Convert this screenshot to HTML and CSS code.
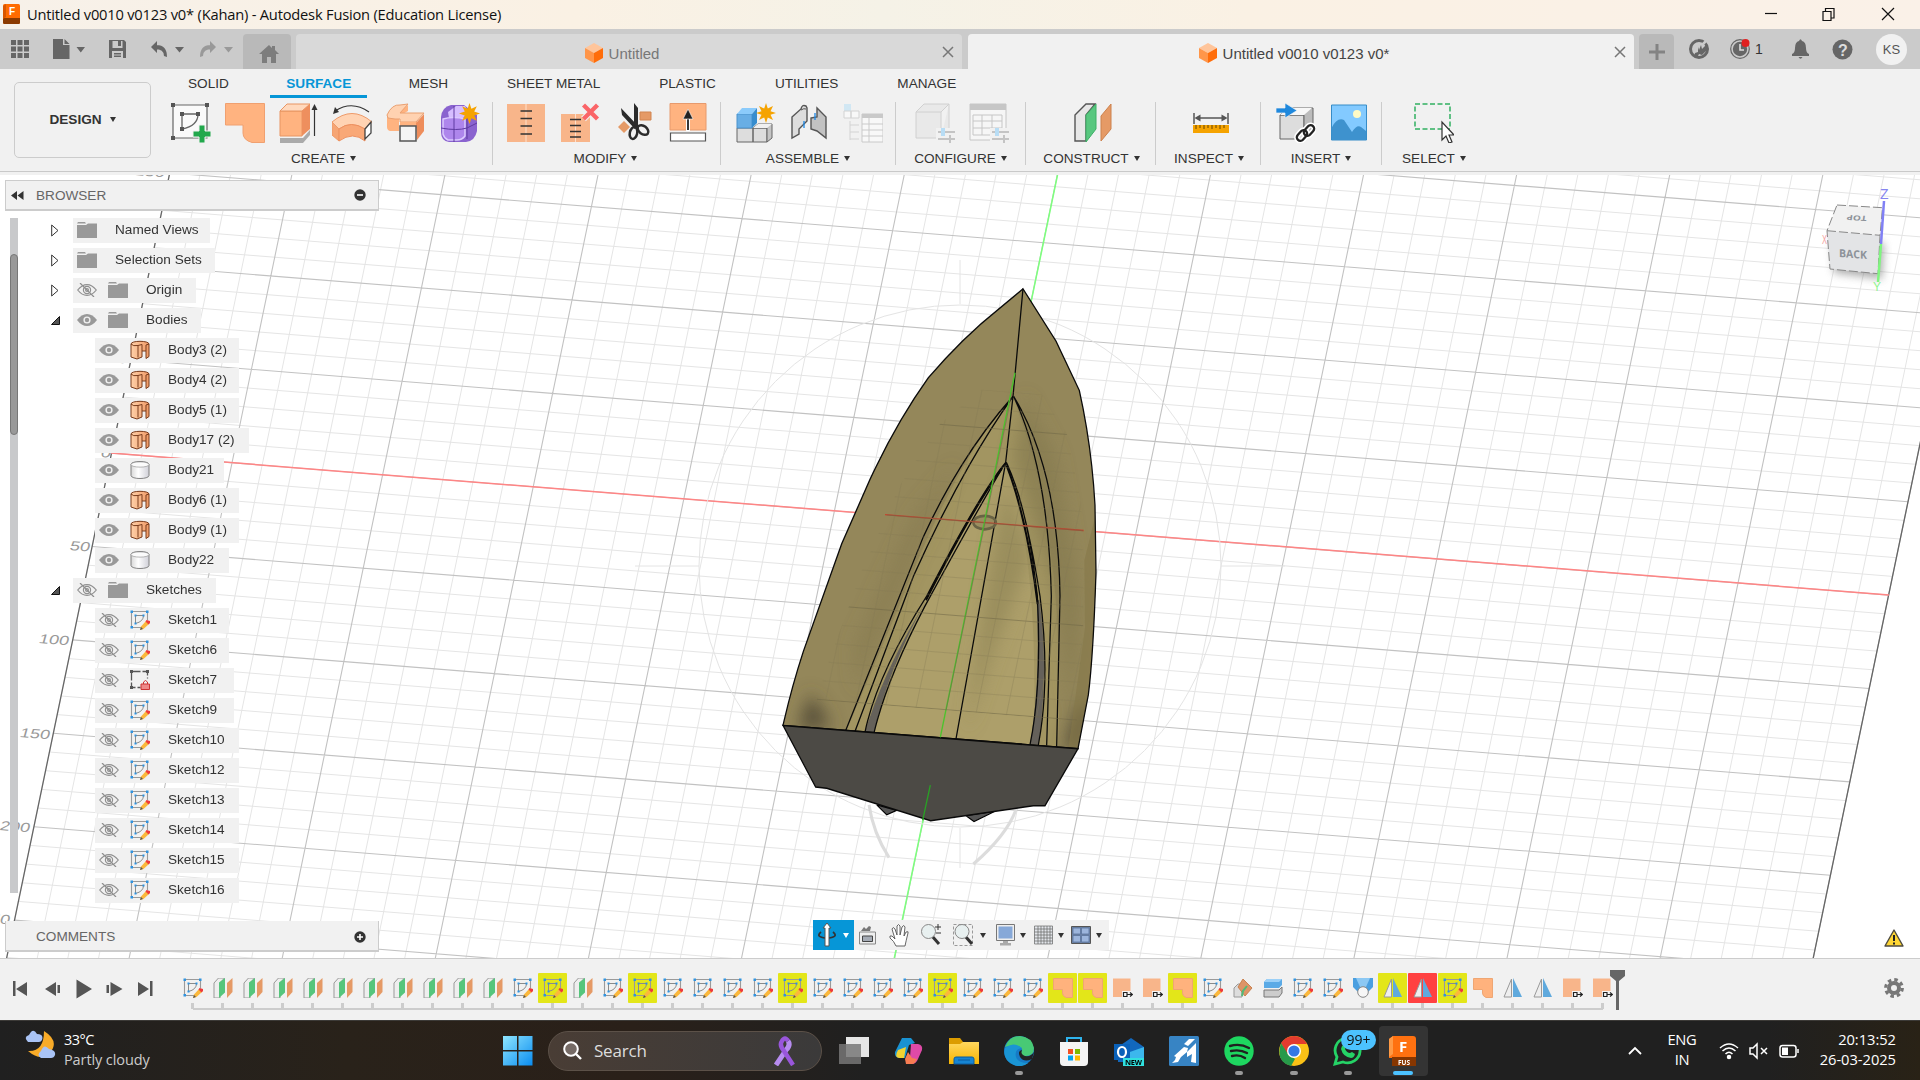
FILE: index.html
```html
<!DOCTYPE html>
<html lang="en">
<head>
<meta charset="utf-8">
<title>Untitled v0010 v0123 v0* (Kahan) - Autodesk Fusion (Education License)</title>
<link rel="stylesheet" href="styles.css">
</head>
<body>
<svg class="defs" width="0" height="0">
  <defs>
    <linearGradient id="gYellow" x2="0" y2="1"><stop stop-color="#ffd75e"/><stop offset="1" stop-color="#f7b500"/></linearGradient>
    <linearGradient id="gWin" x2="1" y2="1"><stop stop-color="#8fe6ff"/><stop offset="1" stop-color="#0a8cf0"/></linearGradient>
    <linearGradient id="gOrange" x2="1" y2="0"><stop stop-color="#ffd0a8"/><stop offset="1" stop-color="#f09a66"/></linearGradient>
    <linearGradient id="gWhite" x2="1" y2="0"><stop stop-color="#d8d8d8"/><stop offset=".4" stop-color="#fff"/><stop offset="1" stop-color="#d0d0d8"/></linearGradient>
    <symbol id="cube" viewBox="0 0 18 20"><path d="M9 0l9 5-9 5-9-5z" fill="#ffc59b"/><path d="M0 5l9 5v10l-9-5z" fill="#ff964a"/><path d="M18 5l-9 5v10l9-5z" fill="#ff6d0a"/></symbol>
    <symbol id="folder" viewBox="0 0 20 16"><path d="M0 1.500L1 0h7l1 1.500zM0 3h9l2-1.500h9V16H0z" fill="#999"/></symbol>
    <symbol id="eye" viewBox="0 0 20 14"><path d="M0 7Q4.500 1 10 1t10 6q-4.500 6-10 6T0 7z" fill="#999"/><circle cx="10" cy="7" r="3.600" fill="#f1f1f1"/><circle cx="10" cy="7" r="2.200" fill="#999"/></symbol>
    <symbol id="eyeoff" viewBox="0 0 20 14"><g fill="none" stroke="#8f8f8f" stroke-width="1.200"><path d="M.7 7Q5 1.600 10 1.600T19.300 7Q15 12.400 10 12.400T.7 7z"/><circle cx="10" cy="7" r="3.600"/><circle cx="10" cy="7" r="1.400"/><path d="M3 0l14 14"/></g></symbol>
    <symbol id="surf" viewBox="0 0 20 20"><path d="M1 4c0-3.600 18-3.600 18 0v12.500l-3 2V11h-4v6l-5 2-6-2z" fill="url(#gOrange)" stroke="#7a3c1c" stroke-width="1"/><path d="M1 4q2 2.500 7 1.500v12M8 5.500l4-1V11M16 11V5l3-1" fill="none" stroke="#7a3c1c"/></symbol>
    <symbol id="solid" viewBox="0 0 20 20"><path d="M1 4.500c0-4 18-4 18 0v11c0 4-18 4-18 0z" fill="url(#gWhite)" stroke="#777" stroke-width=".9"/><path d="M1 4.500c0 3.500 18 3.500 18 0C19 1 1 1 1 4.500z" fill="#fbfbfb" stroke="#888" stroke-width=".6"/></symbol>
    <symbol id="sketch" viewBox="0 0 20 20"><path d="M1.500 1.500h16v9M1.500 1.500v16h10" fill="none" stroke="#9a9a9a" stroke-width="1.100"/><path d="M5.500 13.500v-8h8q0 6-8 8" fill="none" stroke="#8a8a8a" stroke-width="1"/><g fill="#2f93e0"><path d="M.5.5H3V3H.5zM16 .5h2.500V3H16zM.5 16H3v2.500H.5zM4.500 4.500h2v2h-2zM12.500 4.500h2v2h-2zM4.500 12.500h2v2h-2z"/></g><path d="M16.500 10.500l3 3-6 5.500-3.500 1 1-3.500z" fill="#fbb83c"/><path d="M16.500 10l3.500 1v2l-1.500 1.500-3-3z" fill="#ee3b3b"/><path d="M11 17l2 2-3 1z" fill="#555"/></symbol>
    <symbol id="sketchlock" viewBox="0 0 20 20"><path d="M1.500 1.500h16v7M1.500 1.500v16h9" fill="none" stroke="#555" stroke-width="1.300" stroke-dasharray="9 2"/><path d="M0 0h3v3H0zM16 0h3v3h-3zM0 16h3v3H0z" fill="#555"/><path d="M13.500 14v-2q2-3 4 0v2" fill="none" stroke="#c33"/><path d="M11 14h8.500v5.500H11z" fill="#e88" stroke="#c33"/></symbol>
    <symbol id="plane" viewBox="0 0 20 20"><path d="M1 5l4.500-5h6L7 5v15H1z" fill="#eee" stroke="#999"/><path d="M6 4.500L12 0v14.500L6 20z" fill="#55c57c"/><path d="M14 5l5.500-5v14L14 20z" fill="#e59a66"/></symbol>
    <symbol id="patch" viewBox="0 0 20 20"><path d="M.5.5h19v19H13Q9.500 18 9.500 15v-3.500h-9z" fill="#ffb27d" stroke="#efa673"/></symbol>
    <symbol id="extend" viewBox="0 0 20 20"><path d="M0 .5h17.500V19H0z" fill="#f8b58a"/><path d="M9 13h11v7H9z" fill="#f4f4f4"/><path d="M10.500 14.500h3.500v4h-3.500zM14 16.500h5M17 14.500l2.500 2-2.500 2" fill="none" stroke="#222" stroke-width="1.200"/></symbol>
    <symbol id="mirror" viewBox="0 0 20 20"><path d="M8.500 1v18H1z" fill="#eee" stroke="#999"/><path d="M10 0l9 19h-9z" fill="#5fa9dd"/></symbol>
    <symbol id="loft" viewBox="0 0 20 20"><path d="M0 0h20v9l-5 5H5L0 9z" fill="#4a9fe0"/><path d="M3 0h14l-4 9H7z" fill="#8cc8f3"/><circle cx="10" cy="14" r="5.300" fill="#f6f6f6" stroke="#888"/></symbol>
    <symbol id="split" viewBox="0 0 20 20"><path d="M1 12h15l3-3v6l-3 4H1z" fill="#ccc" stroke="#777"/><path d="M1 4l3-3h15v6l-3 3H1z" fill="#5aaae6"/><path d="M1 4l3-3h15l-3 3z" fill="#9bd0f7"/></symbol>
    <symbol id="angle" viewBox="0 0 20 20"><path d="M1 10l4-4h4v13H1z" fill="#ddd" stroke="#999"/><path d="M10 1l9 9-7 8-7-9z" fill="#dd9467" stroke="#c9814f"/><path d="M9 18l1-5 4-5" stroke="#51ba76" stroke-width="2" fill="none"/></symbol>
    <symbol id="star" viewBox="0 0 20 20"><path d="M10 0l1.800 5.500L17 3l-2.500 5.200L20 10l-5.500 1.800L17 17l-5.200-2.500L10 20l-1.800-5.500L3 17l2.500-5.200L0 10l5.500-1.800L3 3l5.200 2.500z" fill="#f5a300"/></symbol>
    <clipPath id="hullGrid"><path d="M905 328L1085 340 1160 440 1200 600 1210 690V930L1190 1165 410 1113 445 1020 545 787 660 570 780 415z"/></clipPath>
    <clipPath id="boatClip"><path d="M1029 73L1128 205 1198 330Q1235 470 1245 620L1248 790Q1240 1000 1225 1100L1194 1236 309 1177Q335 1080 370 990L485 718 570 555Q650 410 745 298 850 195 955 125z"/></clipPath>
    <filter id="soft" x="-50%" y="-50%" width="200%" height="200%"><feGaussianBlur stdDeviation="24"/></filter>
    <filter id="shadow" x="-50%" y="-50%" width="200%" height="200%"><feGaussianBlur stdDeviation="4"/></filter>
  </defs>
</svg>

<div class="app">
  <header class="titlebar">
    <svg class="logo" width="18" height="20" viewBox="0 0 18 20"><rect width="17" height="20" rx="1.500" fill="#ff6b00"/><path d="M0 14h17v5l-1 1H1l-1-1z" fill="#8c3a00"/><path d="M0 2l3-2v13l-3 2z" fill="#d95500"/><text x="6" y="11" font-size="10" font-weight="700" fill="#fff">F</text></svg>
    <span class="title">Untitled v0010 v0123 v0* (Kahan) - Autodesk Fusion (Education License)</span>
    <svg class="wincontrols" width="136" height="14" viewBox="0 0 136 14" fill="none" stroke="#111" stroke-width="1.200"><path d="M1 6.500h12"/><path d="M59 4.500h8v9h-8zM61.500 4V1.500H70V11h-2.500"/><path d="M118 1l12 12M130 1l-12 12"/></svg>
  </header>

  <div class="tabbar">
    <div class="quick">
      <svg width="243" height="40" viewBox="0 0 243 40" fill="#666"><g><path d="M11 11h5v5h-5zM17.500 11h5v5h-5zM24 11h5v5h-5zM11 17.500h5v5h-5zM17.500 17.500h5v5h-5zM24 17.500h5v5h-5zM11 24h5v5h-5zM17.500 24h5v5h-5zM24 24h5v5h-5z"/></g><path d="M53 10h10v6h6.500v14H53zM64.500 10l5 5h-5z"/><path d="M76.500 18h8.500l-4.200 5.500zM175 18h9l-4.500 5.500z"/><path d="M109 11h15l2 2v16h-17z"/><path d="M112.500 12h10v7h-10zM112 22h11v7h-11z" fill="#cbcbcb"/><path d="M118 12h3v5h-3zM114 24h7v1.500h-7zM114 26.500h7V28h-7z"/><path d="M157 12v12l-6-6zM155 16q12-1 12 12l-3-1q0-7-9-7z"/><g fill="#999"><path d="M210 12v12l6-6zM212 16q-12-1-12 12l3-1q0-7 9-7z"/><path d="M224 18h9l-4.500 5.500z"/></g></svg>
    </div>
    <div class="hometab"><svg width="20" height="18" viewBox="0 0 20 18"><path d="M10 0L0 9h3v9h5v-6h4v6h5V9h3l-4-4V1h-3v2z" fill="#7d7d7d"/></svg></div>
    <div class="doctab"><svg width="18" height="20"><use href="#cube"/></svg><span>Untitled</span><svg class="x" width="12" height="12" viewBox="0 0 12 12"><path d="M1 1l10 10M11 1L1 11"/></svg></div>
    <div class="doctab active"><svg width="18" height="20"><use href="#cube"/></svg><span>Untitled v0010 v0123 v0*</span><svg class="x" width="12" height="12" viewBox="0 0 12 12"><path d="M1 1l10 10M11 1L1 11"/></svg></div>
    <div class="plustab"><svg width="16" height="16"><path d="M6.500 0h3v6.500H16v3H9.500V16h-3V9.500H0v-3h6.500z" fill="#838383"/></svg></div>
    <div class="status">
      <svg width="20" height="20" viewBox="0 0 20 20"><circle cx="10" cy="10" r="8.500" fill="none" stroke="#666" stroke-width="3"/><path d="M5 18l1-4 3-1V8l1 3 2-5 1 4 4-4v6l-4 4-3-1-2 4z" fill="#666"/><path d="M13 6l5-5" stroke="#cbcbcb" stroke-width="2.500"/></svg>
      <svg class="clock" width="20" height="20" viewBox="0 0 20 20"><circle cx="10" cy="10" r="9.300" fill="none" stroke="#666" stroke-width="1.200"/><circle cx="10" cy="10" r="7.200" fill="#666"/><path d="M10 5v6h4" stroke="#ddd" stroke-width="1.600" fill="none"/><circle cx="15.500" cy="4" r="4" fill="#e02020"/></svg>
      <span class="jobs">1</span>
      <svg class="bell" width="17" height="20" viewBox="0 0 17 20"><path d="M7 2q1.500-3.500 3 0 4 1 4 7 0 5 3 6v2H0v-2q3-1 3-6 0-6 4-7zM6.500 18h4q-2 3.500-4 0z" fill="#666"/></svg>
      <svg class="help" width="21" height="21" viewBox="0 0 21 21"><circle cx="10.500" cy="10.500" r="10" fill="#666"/><text x="6" y="16.500" font-size="16" font-weight="700" fill="#ddd">?</text></svg>
      <span class="avatar">KS</span>
    </div>
  </div>

  <section class="ribbon">
    <div class="design">DESIGN <i class="arr"></i></div>
    <div class="ribbonmain">
      <nav class="modes"><span>SOLID</span><span class="on">SURFACE</span><span>MESH</span><span>SHEET METAL</span><span>PLASTIC</span><span>UTILITIES</span><span>MANAGE</span></nav>
      <div class="panels">
        <div class="panel create"><div class="icons">
          <svg viewBox="0 0 40 40"><path d="M2 2h34v33H2z" fill="#fafafa" stroke="#666" stroke-width="1.200"/><path d="M11 26V11h16q0 12-16 15" fill="none" stroke="#666" stroke-width="1.300"/><path d="M0 0h4v4H0zM34 0h4v4h-4zM0 33h4v4H0zM9 9h4v4H9zM25 9h4v4h-4zM9 24h4v4H9z" fill="#555"/><path d="M28 22h6v6h6v6h-6v6h-6v-6h-6v-6h6z" fill="#22a84c" stroke="#f1f1f1"/></svg>
          <svg viewBox="0 0 40 40"><path d="M.5.5h39v39H27Q18 37 18 30v-8H.5z" fill="#ffb380" stroke="#f0a070"/></svg>
          <svg viewBox="0 0 40 40"><path d="M1 35h23l7-8v5l-7 8H1z" fill="#aaa"/><path d="M1 8h22v25H1z" fill="#ffb380" stroke="#e89562"/><path d="M1 8l7-7h23l-8 7z" fill="#ffd9bd" stroke="#e89562"/><path d="M23 8l8-7v25l-8 7z" fill="#ee8f5e"/><path d="M35.500 33V4" stroke="#333" stroke-width="1.200"/><path d="M32.500 7h6l-3-6z" fill="#333"/></svg>
          <svg viewBox="0 0 40 40"><path d="M0 19Q20 2 40 19l-7 7Q19 17 7 26z" fill="#ffd3b3" stroke="#ee9a69"/><path d="M0 19l7 7v12l-7-6z" fill="#f6a574" stroke="#ee9a69"/><path d="M7 26q12-9 26 0v12q-12-10-26 0z" fill="#f9a877" stroke="#ee905f"/><path d="M33 26l6-7v11l-6 6z" fill="#fff" stroke="#444" stroke-width="1.300"/><path d="M3 8Q20-3 37 9" fill="none" stroke="#333" stroke-width="1.200"/><path d="M1 11l2-7 4 5z" fill="#333"/></svg>
          <svg viewBox="0 0 40 40"><path d="M1 12h13v-4l8-6v6l-9 5v15H4q-3-1-3-4z" fill="#ffb380"/><path d="M1 12Q6 1 14 2l8-1-8 9h24l-8 9H14v-3H9l-7-1z" fill="#ffd2b1" stroke="#eaa071"/><path d="M14 19h17v6H14z" fill="#ffb380"/><path d="M30 20l8-9v17l-7 9z" fill="#ee8d5b"/><path d="M14 23h16v15H14z" fill="#f4f4f4" stroke="#555" stroke-width="1.500"/></svg>
          <svg viewBox="0 0 40 40"><path d="M1 14Q2 4 11 2h13l13 10v16q-2 10-11 11H9q-8-1-8-10z" fill="#8a63cf"/><path d="M8 9l8-6h9l4 7-6 5H9z" fill="#d6bdff"/><path d="M3 16q10-3 22 0v17q-3 4-8 4H8q-4-2-5-6z" fill="#ae86ec" stroke="#dccaff" stroke-width="1.500"/><path d="M1 25q16 3 26 0l10-5M14 3v36M27 14v22" stroke="#5f3ba1" fill="none"/><use href="#star" x="19" y="0" width="21" height="21"/></svg>
        </div><div class="label">CREATE<i class="arr"></i></div></div>
        <div class="panel modify"><div class="icons">
          <svg viewBox="0 0 40 40"><path d="M1 1h38v38H1z" fill="#f8b58a"/><path d="M20 1v38" stroke="#ffe0ca"/><path d="M14.500 8h11.500M14.500 15.500h11.500M14.500 23h11.500M14.500 31h11.500" stroke="#333" stroke-width="1.400"/></svg>
          <svg viewBox="0 0 40 40"><path d="M1 11h29v28H1z" fill="#f8b58a"/><path d="M15.500 11v28" stroke="#ffe0ca"/><path d="M10 16.500h11M10 22.500h11M10 28.500h11M10 34h11" stroke="#333" stroke-width="1.400"/><path d="M23.500 2l14 14M37.500 2l-14 14" stroke="#f1f1f1" stroke-width="6.500"/><path d="M23.500 2l14 14M37.500 2l-14 14" stroke="#fa6568" stroke-width="4.300"/></svg>
          <svg viewBox="0 0 40 40"><path d="M4 24l6-6 6 6-6 6z" fill="#e59a66"/><path d="M26 9h11v8H26z" fill="#e59a66" stroke="#d18551"/><path d="M7 5l17 18-4 2L8 12zM20 0l4 5v19l-4 2z" fill="#2b2b2b"/><ellipse cx="19.500" cy="30" rx="3.700" ry="6" transform="rotate(12 19.500 30)" fill="none" stroke="#2b2b2b" stroke-width="2.500"/><ellipse cx="29" cy="27" rx="6" ry="4" transform="rotate(38 29 27)" fill="none" stroke="#2b2b2b" stroke-width="2.500"/></svg>
          <svg viewBox="0 0 40 40"><path d="M2 .5h36V27H2z" fill="#ffb380" stroke="#e79a6d"/><path d="M2.500 30h35v8h-35z" fill="#fff" stroke="#555" stroke-width="1.200"/><path d="M20 28V14" stroke="#fff" stroke-width="4"/><path d="M20 27V14" stroke="#222" stroke-width="1.800"/><path d="M15 16l5-10 5 10z" fill="#222" stroke="#fff" stroke-width=".6"/></svg>
        </div><div class="label">MODIFY<i class="arr"></i></div></div>
        <div class="panel assemble"><div class="icons">
          <svg viewBox="0 0 40 40"><path d="M1 25h16v14H1zM17 25h14v14H17z" fill="#ddd" stroke="#666"/><path d="M17 25l5-4h14v14l-5 4V25z" fill="#c5c5c5" stroke="#666"/><path d="M17 25l5-4h14l-5 4z" fill="#f0f0f0"/><path d="M1 11h15v14H1z" fill="#68aee5" stroke="#4a92cc"/><path d="M1 11l5-6h15l-5 6z" fill="#8bcbfb"/><path d="M16 11l5-6v15l-5 5z" fill="#378dce"/><use href="#star" x="20" y="0" width="20" height="20"/></svg>
          <svg viewBox="0 0 40 40"><path d="M2 14l9-8q1-5 5-3l1 2v13l-8 8v5l-7 4z" fill="#ddd" stroke="#555" stroke-width="1.400"/><path d="M11 7q3-2 5-1" fill="none" stroke="#555"/><path d="M21 15l6-1V5l9 9v21l-9-7-6-2z" fill="#c2c2c2" stroke="#555" stroke-width="1.400"/><path d="M14 18v7M25 10v7" stroke="#1e88e5" stroke-width="1.300"/></svg>
          <svg viewBox="0 0 40 40" opacity=".55"><path d="M1 1h7v7H1z" fill="#b8dff5"/><path d="M1 8h7v7H1zM8 8h8v7H8z" fill="#fff" stroke="#bbb"/><path d="M7 18v19M7 22h9M7 29h9M7 36h9" stroke="#bbb"/><path d="M19 11h21v28H19z" fill="#fff" stroke="#aaa"/><path d="M19 11h21v4H19z" fill="#aaa"/><path d="M19 21h21M19 27h21M19 33h21M26 15v24" stroke="#aaa"/></svg>
        </div><div class="label">ASSEMBLE<i class="arr"></i></div></div>
        <div class="panel configure"><div class="icons">
          <svg viewBox="0 0 40 40"><path d="M1 9h25v26H1zM1 9l8-8h25l-8 8M34 1v26l-8 8" fill="#e9e9e9" stroke="#d0d0d0"/><path d="M21 25h19v15H21z" fill="#f1f1f1"/><path d="M23 29h17M23 36h17M35 32v8" stroke="#c4c4c4" stroke-width="2"/><path d="M28 25v8" stroke="#b8ddf5" stroke-width="4"/></svg>
          <svg viewBox="0 0 40 40"><path d="M1 1h36v36H1z" fill="#f6f6f6" stroke="#c6c6c6"/><path d="M1 1h36v6H1z" fill="#c6c6c6"/><path d="M4 12h29v20H4zM4 18h29M4 25h29M13 12v20M23 12v20" fill="none" stroke="#c6c6c6"/><path d="M21 25h19v15H21z" fill="#f1f1f1"/><path d="M23 29h17M23 36h17M35 32v8" stroke="#c4c4c4" stroke-width="2"/><path d="M28 25v8" stroke="#b8ddf5" stroke-width="4"/></svg>
        </div><div class="label">CONFIGURE<i class="arr"></i></div></div>
        <div class="panel construct"><div class="icons">
          <svg viewBox="0 0 40 40"><path d="M2 12L13 1h9l-9 11v26H2z" fill="#e7e7e7" stroke="#555" stroke-width="1.400"/><path d="M13 12L23 1v25L13 39z" fill="#58c77f" stroke="#3daf66"/><path d="M28 13L38 1v25L28 38z" fill="#e59a66" stroke="#cc814c"/></svg>
        </div><div class="label">CONSTRUCT<i class="arr"></i></div></div>
        <div class="panel inspect"><div class="icons">
          <svg viewBox="0 0 40 40"><path d="M3 10v11M37 10v11M5 15h30" stroke="#555" stroke-width="1.500"/><path d="M3.500 15l6-3.500v7zM36.500 15l-6-3.500v7z" fill="#555"/><path d="M2 22h36v8H2z" fill="#f5a300"/><path d="M5 22v4M9 22v3M13 22v4M17 22v3M21 22v4M25 22v3M29 22v4M33 22v3" stroke="#664400"/></svg>
        </div><div class="label">INSPECT<i class="arr"></i></div></div>
        <div class="panel insert"><div class="icons">
          <svg viewBox="0 0 40 40"><path d="M4 12h24v24H4z" fill="#ddd" stroke="#666"/><path d="M4 12l8-7h25v23l-9 8V12z" fill="#bbb" stroke="#666"/><path d="M4 12l8-7h24l-8 7z" fill="#f7f7f7"/><path d="M0 5h9V0l12 7.500L9 15v-5H0z" fill="#1e88dd" stroke="#f1f1f1" stroke-width=".7"/><g fill="none"><g stroke="#fff" stroke-width="5.500"><rect x="20" y="29" width="12" height="7" rx="3.500" transform="rotate(-48 26 32.500)"/><rect x="27" y="24" width="12" height="7" rx="3.500" transform="rotate(-48 33 27.500)"/></g><g stroke="#222" stroke-width="2.300"><rect x="20" y="29" width="12" height="7" rx="3.500" transform="rotate(-48 26 32.500)"/><rect x="27" y="24" width="12" height="7" rx="3.500" transform="rotate(-48 33 27.500)"/></g></g></svg>
          <svg viewBox="0 0 40 40"><path d="M2.500 2h35v35h-35z" fill="#83caff" stroke="#368cc7"/><path d="M2.500 25Q8 14 15 17l8 12q5-8 9-5l5 4v9h-34z" fill="#3e92ce"/><circle cx="28" cy="11" r="4" fill="#fffbc5"/></svg>
        </div><div class="label">INSERT<i class="arr"></i></div></div>
        <div class="panel select"><div class="icons">
          <svg viewBox="0 0 40 40"><path d="M1 1h35v25H1z" fill="none" stroke="#30b060" stroke-width="1.500" stroke-dasharray="5 2.500"/><path d="M28 19v18l4-4 3 7 3-1-3-7h5z" fill="#fff" stroke="#333" stroke-width="1.200"/></svg>
        </div><div class="label">SELECT<i class="arr"></i></div></div>
      </div>
    </div>
  </section>

  <main class="viewport">
    <svg class="scene" viewBox="0 175 1920 783" width="1920" height="783">
      <g id="grid"></g>
      <path d="M110.700 453L1889 595" stroke="#ff8585" stroke-width="1.500"/>
      <path d="M1057.500 175L893.500 962" stroke="#7dff7d" stroke-width="1.500"/>
      <g class="ruler">
        <text transform="matrix(1 .08 -.2 .72 69 550)">50</text><text transform="matrix(1 .08 -.2 .72 38 643)">100</text><text transform="matrix(1 .08 -.2 .72 19 737)">150</text><text transform="matrix(1 .08 -.2 .72 -1 830)">200</text><text transform="matrix(1 .08 -.2 .72 -21 922)">250</text><text transform="matrix(1 .08 -.2 .72 100 457)">0</text><text transform="matrix(1 .08 -.2 .72 107 362)">50</text><text transform="matrix(1 .08 -.2 .72 134 175)">150</text>
      </g>
      <g fill="none" stroke="#e4e4e4"><circle cx="960" cy="566" r="261"/><path d="M960 260v44M960 828v40M635 566h64M1221 566h64"/></g>
      <g transform="translate(680 260) scale(.33333 .39541)">
        <path d="M567 1378Q580 1450 627 1511M1008 1390Q980 1455 880 1528" fill="none" stroke="#dcdcdc" stroke-width="9"/>
        <path d="M590 1378L620 1403 650 1392zM857 1405L882 1420 945 1394z" fill="#555" stroke="#000" stroke-width="3"/>
        <g clip-path="url(#boatClip)">
          <path d="M0 0h1560v1568H0z" fill="#94875a"/>
          <path d="M999 345Q830 500 660 870L500 1190 1134 1232Q1160 700 999 345z" fill="#a29561"/>
          <path d="M977 512Q1080 760 1060 1230L582 1196Q690 880 977 512z" fill="#ad9f6a"/>
          <g filter="url(#soft)">
            <path d="M999 500L1035 350 1130 500 1200 850 1180 1150 1130 850z" fill="#857a50" opacity=".7"/>
            <path d="M830 520L700 650 520 980 530 1080 720 720z" fill="#857a50" opacity=".55"/>
            <path d="M350 1190L390 1100 460 1180zM1150 1240L1200 1120 1240 1140 1200 1240z" fill="#544d38"/>
            <path d="M975 560L925 800 860 1190 935 1000 1050 750z" fill="#928657" opacity=".7"/>
          </g>
          <path d="M1248 640L1213 760 1215 930 1165 1235H1194L1248 1000z" fill="#857849" opacity=".6"/>
          <path d="M745 855Q620 1020 555 1193L582 1195Q620 1050 720 890zM1070 860Q1082 1070 1050 1226H1075Q1108 1040 1078 860z" fill="#65615a"/>
        </g>
        <g fill="none" stroke="#0a0a0a" stroke-width="3.800">
          <path d="M1029 73L999 345 977 512 828 1211"/>
          <path d="M999 345Q845 490 730 700L497 1190M999 345Q850 520 700 800L525 1192M977 512Q900 590 740 850 590 1050 555 1194M977 512Q900 620 735 875 620 1060 582 1196"/>
          <path d="M1001 345Q1135 530 1140 850L1130 1231M1001 345Q1105 530 1114 850L1100 1228M977 512Q1040 610 1072 850 1086 1080 1050 1226M979 512Q1035 610 1080 850 1112 1060 1075 1227"/>
          <path d="M965 528Q880 625 738 860M980 520Q1040 650 1073 870" stroke-width="6"/>
          <path d="M1029 73L1128 205 1198 330Q1235 470 1245 620L1248 790Q1240 1000 1225 1100L1194 1236 309 1177Q335 1080 370 990L485 718 570 555Q650 410 745 298 850 195 955 125z"/>
        </g>
        <path d="M309 1177L1194 1236 1095 1380 1060 1380 752 1418 440 1336 407 1333z" fill="#4c4a45" stroke="#0a0a0a" stroke-width="3.800"/>
        <ellipse cx="914" cy="664" rx="34" ry="17" fill="#776f4d" fill-opacity=".35" stroke="#696344" stroke-width="7"/>
        <path d="M615 644L1211 684" stroke="#c2442f" stroke-width="3.400"/>
        <path d="M1005 285L781 1207" stroke="#4cc32d" stroke-width="4"/>
        <path d="M751 1328L728 1417" stroke="#2aa026" stroke-width="4"/>
        <g clip-path="url(#hullGrid)"><g id="hullLines" transform="scale(3 2.529) translate(-680 -260)" opacity=".55"></g></g>
      </g>
      <g class="viewcube">
        <path d="M1832 238L1884 243 1882 279 1834 273z" fill="#777" opacity=".6" filter="url(#shadow)"/>
        <path d="M1837 205L1882.500 207.700 1880 235.300 1827 230.700z" fill="#f1f1f1"/><path d="M1827 230.700L1880 235.300 1878 273.700 1830 269z" fill="#e3e4e6"/>
        <path d="M1837 205L1882.500 207.700 1880 235.300 1878 273.700 1830 269 1827 230.700zM1827 230.700L1880 235.300" fill="none" stroke="#888" stroke-dasharray="9 3"/>
        <path d="M1884 201L1881 244" stroke="#8080f5" stroke-width="2.500"/><path d="M1881 244L1878 282" stroke="#80f580" stroke-width="2.500"/>
        <text x="1880" y="199" fill="#8585ef" font-size="14">Z</text><text x="1873" y="291" fill="#90f590" font-size="12">Y</text><text x="1822" y="244" fill="#f5a0a0" font-size="13" textLength="5" lengthAdjust="spacingAndGlyphs">X</text>
        <text class="face" transform="matrix(1 .07 0 1.050 1839 257)" font-size="10.500">BACK</text><text class="face" transform="matrix(-1 -.06 .1 -.7 1867 216)" font-size="10">TOP</text>
      </g>
    </svg>

    <div class="panelbar browser"><svg width="13" height="9" viewBox="0 0 13 9"><path d="M6 0v9L0 4.500zM12.500 0v9l-6-4.500z" fill="#333"/></svg><span>BROWSER</span><svg width="12" height="12"><circle cx="6" cy="6" r="5.700" fill="#333"/><path d="M3 6h6" stroke="#fff" stroke-width="1.600"/></svg></div>
    <div class="treewrap"><div class="track"><div class="thumb"></div></div><div class="tree" id="tree"></div></div>
    <div class="panelbar comments"><span>COMMENTS</span><svg width="12" height="12"><circle cx="6" cy="6" r="5.700" fill="#333"/><path d="M3 6h6M6 3v6" stroke="#fff" stroke-width="1.600"/></svg></div>

    <div class="navbar">
      <div class="orbit"><svg width="20" height="26" viewBox="0 0 20 26"><path d="M4 10q-6 5 5 6M16 10q6 5-5 6" fill="none" stroke="#333" stroke-width="1.800"/><path d="M8 24V6H6l4-5 4 5h-2v18z" fill="#fff" stroke="#555"/></svg><i class="arr w"></i></div>
      <svg width="20" height="22" viewBox="0 0 20 22"><path d="M3 7l3-4 2 2 3-3 2 1-1 4z" fill="#777"/><path d="M1.500 8h16v12h-16z" fill="#eee" stroke="#888"/><path d="M4.500 12h10v5.500h-10z" fill="#a5abb5" stroke="#444"/></svg>
      <svg width="20" height="24" viewBox="0 0 20 24"><path d="M7 23q-2-5-6-8-1-3 2-2l3 3L3 6q1-3 3 0l2 6V3q1.500-3 3 0v9l2-8q2-3 3 0l-1 9 2-4q3-1 2 1-2 8-3 13z" fill="#fff" stroke="#555" stroke-width=".9"/></svg>
      <svg width="22" height="24" viewBox="0 0 22 24"><path d="M12 13l7 8" stroke="#333" stroke-width="3"/><circle cx="8.500" cy="8.500" r="7" fill="#e8f0f0" stroke="#888"/><path d="M18 1v6M15 4h6M16 10h5" stroke="#333"/></svg>
      <div class="nav zoomwin"><svg width="20" height="24" viewBox="0 0 20 24"><path d="M.5 1.500h19v21H.5z" fill="none" stroke="#999" stroke-dasharray="3 2"/><path d="M12 13l7 8" stroke="#333" stroke-width="3"/><circle cx="9" cy="8.500" r="7" fill="#e8f0f0" stroke="#888"/></svg><i class="arr"></i></div>
      <div class="nav"><svg width="19" height="24" viewBox="0 0 19 24"><path d="M.5 1.500h18v16H.5z" fill="#eee" stroke="#777"/><path d="M2.500 3.500h14v12h-14z" fill="#86a8d8"/><path d="M7 18h5v2h3v2.500H4V20h3z" fill="#aaa"/></svg><i class="arr"></i></div>
      <div class="nav"><svg width="19" height="20" viewBox="0 0 19 20"><path d="M.5 1h18v18H.5zM.5 4h18M.5 7h18M.5 10h18M.5 13h18M.5 16h18M4 1v18M7 1v18M10 1v18M13 1v18M16 1v18" fill="#e2e5ea" stroke="#666" stroke-width=".7"/></svg><i class="arr"></i></div>
      <div class="nav"><svg width="20" height="18" viewBox="0 0 20 18"><path d="M.5.5h19v17H.5z" fill="#6d83a5" stroke="#555"/><path d="M2 2h7.500v6H2zM10.500 2H18v6h-7.500zM2 9.500h7.500V16H2zM10.500 9.500H18V16h-7.500z" fill="#9cb5dc" stroke="#5a749c" stroke-width=".8"/></svg><i class="arr"></i></div>
    </div>
    <svg class="warning" width="20" height="18" viewBox="0 0 20 18"><path d="M10 1L19 17H1z" fill="#ffd633" stroke="#4d4a40" stroke-width="1.400" stroke-linejoin="round"/><path d="M10 6v6M10 13.500v2" stroke="#222" stroke-width="2"/></svg>
  </main>

  <section class="timeline">
    <svg class="play" width="142" height="20" viewBox="0 0 142 20" fill="#555"><path d="M0 2h2.500v15H0zM14 3v14L3 10zM43 3v14l-11-7zM44.500 6H47v8h-2.500zM63.500.500L79 10 63.500 19.500zM93.500 6H96v8h-2.500zM97.500 3l12 7-12 7zM125 3v14l11-7zM137 2h2.500v15H137z"/></svg>
    <div class="steps" id="steps"></div>
    <svg class="marker" width="15" height="40" viewBox="0 0 15 40"><path d="M0 0h15v6L9 11v29H6V11L0 6z" fill="#666"/></svg>
    <svg class="gear" width="20" height="20" viewBox="0 0 20 20"><circle cx="10" cy="10" r="8.300" fill="none" stroke="#777" stroke-width="3.200" stroke-dasharray="3.500 3.020"/><circle cx="10" cy="10" r="5" fill="none" stroke="#777" stroke-width="4"/></svg>
  </section>

  <footer class="taskbar">
    <div class="weather"><svg width="31" height="30" viewBox="0 0 31 30"><path d="M19 1q16 10 6 22-9 9-22-2 16 1 16-20z" fill="#f8ab28"/><path d="M3 12q-5-5 1-7 4-8 8-1 7 0 5 6-1 2-3 2zM16 28q-5-3 0-7 3-8 8-2 7 1 6 6-1 3-4 3z" fill="#a9c3f5"/></svg><div><b>33°C</b><span>Partly cloudy</span></div></div>
    <div class="apps">
      <svg width="30" height="30"><path d="M0 0h14v14H0zM15.500 0h14v14h-14zM0 15.500h14v14H0zM15.500 15.500h14v14h-14z" fill="url(#gWin)"/></svg>
      <div class="search"><svg width="20" height="20" viewBox="0 0 20 20"><circle cx="8" cy="8" r="6.800" fill="#766b66" stroke="#fff" stroke-width="2"/><path d="M13 13l5 5" stroke="#fff" stroke-width="2.400"/></svg><span>Search</span><svg width="22" height="30" viewBox="0 0 22 30"><path d="M14 5q3 4-2 9L2 29" fill="none" stroke="#b78cf0" stroke-width="5"/><path d="M14 5q-3-5-6 0-3 4 2 10l9 14" fill="none" stroke="#9956db" stroke-width="4.500"/></svg></div>
      <div class="app-ic"><svg viewBox="0 0 30 30"><path d="M7 1h23v20H7z" fill="#e6e6e6"/><path d="M0 8h22v20H0z" fill="#777" opacity=".85"/></svg></div>
      <div class="app-ic"><svg viewBox="0 0 30 30"><path d="M8 2h9l4 5-6 2-4 13H5q-5-1-4-6z" fill="#1992d2"/><path d="M4 14l8-3-2 11H5q-5-1-1-8z" fill="#f2d331"/><path d="M17 8h7q5 1 4 6l-4 9q-2 5-6 5h-6l4-7z" fill="#df4aa7"/><path d="M14 16l-3 7 1 5h6q3 0 5-5l-5-1z" fill="#f77c52"/></svg></div>
      <div class="app-ic"><svg viewBox="0 0 30 30"><path d="M0 2h11l3 4h14v8H0z" fill="#dc9c00"/><path d="M0 8h11l3-2h16v22H0z" fill="url(#gYellow)"/><path d="M5 28v-5q0-2 2-2h16q2 0 2 2v5zM9 24h12" fill="#1685d3" stroke="#0b5da0"/></svg></div>
      <div class="app-ic run"><svg viewBox="0 0 30 30"><circle cx="15" cy="15" r="15" fill="#167ac6"/><path d="M1 11Q5 0 16 0q12 1 14 12 0 9-10 8-5-2-2-5 1-4-5-5-6-1-12 1z" fill="#48c975"/><path d="M1 12q8-7 17 0-8 1-6 9 2 6 12 6-6 5-14 2Q-2 24 1 12z" fill="#1a95d4"/><path d="M18 14q-5 1-2 7 4 6 12 2l2-7q-3 5-9 4-5-2-3-6z" fill="#222"/></svg></div>
      <div class="app-ic"><svg viewBox="0 0 30 30"><path d="M8 8V2h14v6" fill="none" stroke="#2eb3ed" stroke-width="2"/><path d="M1 6h28v20q0 4-4 4H5q-4 0-4-4z" fill="#f4f4f4"/><path d="M9 13h5v5H9z" fill="#f25022"/><path d="M16 13h5v5h-5z" fill="#7fba00"/><path d="M9 19.500h5v5H9z" fill="#00a4ef"/><path d="M16 19.500h5v5h-5z" fill="#ffb900"/></svg></div>
      <div class="app-ic"><svg viewBox="0 0 30 30"><path d="M4 11L17 2l13 9v15H4z" fill="#1268bd"/><path d="M13 17l17-6v16H15z" fill="#3cb7ed"/><path d="M0 8h16v16H0z" fill="#0a61b9"/><ellipse cx="8" cy="16" rx="4" ry="5" fill="none" stroke="#fff" stroke-width="2.200"/><rect x="9" y="22" width="21" height="8.500" fill="#30e1df"/><text x="11" y="29" font-size="7.500" font-weight="700" textLength="17">NEW</text></svg></div>
      <div class="app-ic"><svg viewBox="0 0 30 30"><rect width="30" height="30" rx="1.500" fill="#3784c4"/><path d="M3 27l3-3 1-3-2-1 10-9 4 1-1 4-6 5-3 5zM18 16l9-9v20l-5-1 1-8-5 3zM15 8l5-5h6l-7 7z" fill="#fff"/></svg></div>
      <div class="app-ic run"><svg viewBox="0 0 30 30"><circle cx="15" cy="15" r="14.700" fill="#1ed760"/><path d="M6 10q10-3 19 2M7 15q9-2 16 2M8 20q7-2 13 2" fill="none" stroke="#202020" stroke-width="2.400" stroke-linecap="round"/></svg></div>
      <div class="app-ic run"><svg viewBox="0 0 30 30"><circle cx="15" cy="15" r="15" fill="#fbc116"/><path d="M2 7Q7 0 15 0t13 8H15l-7 10z" fill="#e33b2e"/><path d="M2 7l7 11 7 5-4 7Q-4 26 2 7z" fill="#279a4a"/><circle cx="15" cy="15" r="7" fill="#fff"/><circle cx="15" cy="15" r="5.600" fill="#3478e5"/></svg></div>
      <div class="app-ic run"><svg viewBox="0 0 30 30"><path d="M2 28l2-7A12.500 12.500 0 1 1 10 26z" fill="#222" stroke="#25d366" stroke-width="2.800"/><path d="M9 10q3-3 4 1l-1 2q2 4 5 4l2-1 3 2q-1 4-4 4-8-1-10-9z" fill="#25d366"/></svg><em class="badge">99+</em></div>
      <div class="app-ic fusion"><svg viewBox="0 0 30 30"><path d="M1 3l4-3h20q3 0 3 3v27H4v-8H1z" fill="#ff7110"/><path d="M1 3l4-3v18l-4 3z" fill="#ff9a45"/><path d="M4 21h24v9H4z" fill="#873600"/><text x="11" y="16" font-size="15" font-weight="700" fill="#fff">F</text><text x="10" y="28.500" font-size="6.500" font-weight="700" fill="#fff" textLength="12">FUS</text></svg></div>
    </div>
    <div class="tray">
      <svg width="14" height="9"><path d="M1 8l6-6 6 6" fill="none" stroke="#fff" stroke-width="1.800"/></svg>
      <div class="lang">ENG<br>IN</div>
      <svg width="82" height="18" viewBox="0 0 82 18" fill="none" stroke="#fff" stroke-width="1.500"><path d="M1 6q9-8 18 0M3.500 9q6.500-6 13 0M6.500 12q3.500-3.500 7 0"/><circle cx="10" cy="15" r="1.500" fill="#fff"/><path d="M31 6h3l4-4v14l-4-4h-3zM42 6l6 6M48 6l-6 6"/><rect x="61" y="3.500" width="16" height="11.500" rx="2.500"/><path d="M79 7v4"/><path d="M63 5.500h6v7.500h-6z" fill="#fff" stroke="none"/></svg>
      <div class="time">20:13:52<br>26-03-2025</div>
    </div>
  </footer>
</div>
<script src="script.js"></script>
</body>
</html>
```
FILE: styles.css
```css
* { box-sizing: border-box; }
body { margin: 0; font-family: "Liberation Sans", Arial, sans-serif; font-size: 13.6px; color: #333; overflow: hidden; }
.defs { position: absolute; }
svg { display: block; flex: none; }
.app { width: 1920px; height: 1080px; display: flex; flex-direction: column; background: #f1f1f1; }

.titlebar { height: 29px; background: linear-gradient(90deg, #f7f1e9, #faf1e4 30%, #f5f2e7 46%, #faf1e4 65%, #faf1e8); display: flex; align-items: center; padding: 0 20px 1px 3px; color: #111; }
.title { font: 14.7px/26px "Open Sans", sans-serif; letter-spacing: -.21px; margin-left: 6px; white-space: nowrap; flex: 1; }

.tabbar { height: 40px; background: #cbcbcb; display: flex; align-items: flex-end; }
.quick { width: 243px; height: 40px; }
.hometab, .plustab { background: #b9b9b9; height: 35px; border-radius: 4px 4px 0 0; display: flex; align-items: center; justify-content: center; }
.hometab { width: 48px; margin-right: 5px; padding: 4px 0 0 3px; }
.plustab { width: 35px; margin-left: 5px; }
.doctab { width: 666px; height: 35px; background: #d9d9d9; border-radius: 4px 4px 0 0; display: flex; align-items: center; justify-content: center; gap: 6px; position: relative; color: #777; padding: 3px 14px 0 0; }
.doctab.active { background: #f1f1f1; color: #444; margin-left: 6px; }
.doctab span { font-size: 15px; }
.doctab .x { position: absolute; right: 8px; top: 12px; stroke: #777; stroke-width: 1.5; }
.status { display: flex; align-items: center; height: 40px; flex: 1; padding-left: 15px; }
.clock { margin-left: 21px; }
.jobs { width: 12px; margin: 0 27px 0 3px; font-size: 14px; text-align: center; }
.help { margin-left: 23px; }
.avatar { margin-left: 23px; width: 31px; height: 31px; border-radius: 50%; background: #f1f1f1; display: flex; align-items: center; justify-content: center; color: #555; font-size: 13px; }

.ribbon { height: 103px; display: flex; border-bottom: 1px solid #c9c9c9; margin-bottom: 3px; }
.design { width: 137px; height: 76px; margin: 13px 0 0 14px; padding-bottom: 2px; border: 1.5px solid #ccc; border-radius: 5px; display: flex; align-items: center; justify-content: center; font-weight: 700; }
.arr { display: inline-block; border: 3.5px solid transparent; border-top: 5.5px solid #333; border-bottom: 0; margin-left: 5px; vertical-align: 2px; }
.design .arr { margin-left: 8px; }
.ribbonmain { padding-left: 4px; }
.modes { display: flex; gap: 59px; height: 29px; padding: 7px 0 0 33px; }
.modes .on { color: #0696d7; font-weight: 700; position: relative; margin: 0 -1.5px; }
.modes .on::after { content: ""; position: absolute; left: -16px; right: -16px; bottom: 0; height: 3px; background: #0696d7; }
.panels { display: flex; padding-top: 4px; }
.panel { height: 63px; border-right: 1.5px solid #ccc; }
.panel:last-child { border: 0; }
.icons { display: flex; justify-content: center; gap: 13.7px; height: 41px; padding: 1px 0 0 3px; }
.create .icons { padding-left: 4px; }
.modify .icons { padding-left: 1px; }
.icons svg { width: 40px; height: 40px; }
.label { text-align: center; margin-top: 7.5px; white-space: nowrap; line-height: 16px; }
.construct, .inspect, .select { padding-left: 2px; }
.create { width: 338px; } .modify { width: 228px; } .assemble { width: 175px; } .configure { width: 130px; }
.construct { width: 130px; } .inspect { width: 105px; } .insert { width: 121px; } .select { width: 102px; }
.modify .label { padding-right: 2px; }
.select .icons { padding-left: 0; }

.viewport { height: 783px; position: relative; background: #fff; display: flex; flex-direction: column; padding: 5px 0 0 5px; }
.scene { position: absolute; left: 0; top: 0; }
.ruler { font-size: 18px; fill: #999; }
.face { font-family: "Open Sans", sans-serif; font-weight: 700; fill: #8d9299; }
.panelbar { position: relative; width: 374px; height: 31px; background: #f1f1f1; border: 1px solid #ccc; border-width: 1px 1px 2px 1px; display: flex; align-items: center; padding: 0 12px 0 6px; color: #666; }
.browser svg:first-child { margin-left: -1px; }
.panelbar span { flex: 1; margin-left: 12px; }
.comments span { margin-left: 24px; }
.comments { margin-top: 28px; padding-top: 2px; border-top: 0; }
.treewrap { position: relative; display: flex; height: 682px; padding: 7px 0 0 5px; }
.track { width: 8px; height: 675px; background: #c8c9cb; padding-top: 36px; }
.thumb { width: 8px; height: 181px; border-radius: 4px; background: #999; border: 1px solid #777; }
.tree { width: 340px; margin-top: -3px; }
.row { height: 30px; display: flex; align-items: center; padding-left: 33px; }
.tw { width: 8px; margin-right: 14px; }
.cell { height: 25px; background: #f1f1f1; display: flex; align-items: center; white-space: nowrap; padding-left: 4px; }
.cell svg { margin-right: 11px; }
.cell span { margin-left: 7px; line-height: 24px; height: 25px; }
.row.child .tw { margin-right: 36px; }
.navbar { position: absolute; left: 813px; top: 745px; width: 296px; height: 30px; background: #f1f1f1; display: flex; align-items: center; gap: 11px; }
.navbar .arr { margin-left: 5px; border-width: 5px 3.5px 0; }
.orbit { background: #0696d7; width: 41px; height: 30px; display: flex; align-items: center; padding-left: 4px; margin-right: -7px; }
.navbar .arr.w { border-top-color: #fff; margin-left: 6px; }
.nav { display: flex; align-items: center; margin-right: -3.5px; }
.zoomwin { margin-right: -1px; }
.zoomwin .arr { margin-left: 7px; }
.warning { position: absolute; left: 1884px; top: 754px; }

.timeline { height: 62px; background: #f1f1f1; border-top: 1px solid #ccc; display: flex; align-items: flex-start; padding-left: 13px; }
.play { margin-top: 20px; }
.steps { display: flex; margin: 14px 0 0 22.5px; height: 38px; width: 1440px; background: linear-gradient(#ccc, #ccc) 15px 35px / 1410px 2px no-repeat; }
.step { width: 30px; height: 37px; display: flex; flex-direction: column; align-items: center; }
.step div { width: 29px; height: 30px; display: flex; align-items: center; justify-content: center; border-radius: 1px; }
.step::after { content: ""; width: 3px; height: 6px; background: #ccc; }
.warn div { background: #e3e619; }
.err div { background: #ff4141; }
.marker { margin: 11px 0 0 -8px; }
.gear { margin: 19px 0 0 259px; }

.taskbar { height: 60px; background: linear-gradient(90deg, #202020, #29221a 18%, #2a2019 33%, #202020 45%, #202020 92%, #292216); color: #fff; display: flex; align-items: center; font-family: "Open Sans", sans-serif; position: relative; border-top: 1px solid #3c3a37; }
.weather { width: 503px; display: flex; gap: 8px; padding: 0 0 2px 25px; line-height: 20px; font-size: 14.5px; }
.weather b { font-weight: 400; display: block; letter-spacing: -.5px; }
.weather span { color: #ccc; letter-spacing: -.1px; }
.apps { display: flex; align-items: center; }
.search { width: 274px; height: 40px; margin: 0 5px 0 15px; border: 1px solid #5c5148; border-radius: 20px; background: linear-gradient(90deg, #493d35, #3b3a3a); display: flex; align-items: center; padding: 0 25px 0 14px; font-size: 17px; color: #ddd; }
.search span { flex: 1; margin-left: 11px; letter-spacing: -.2px; }
.app-ic { width: 54.9px; height: 60px; display: flex; align-items: center; justify-content: center; position: relative; }
.app-ic > svg { width: 30px; height: 30px; }
.run::after, .fusion::after { content: ""; position: absolute; bottom: 6px; width: 8px; height: 4px; border-radius: 2px; background: #999; }
.fusion { width: 49px; height: 50px; margin-left: 3px; background: #343434; border-radius: 4px; }
.fusion::after { width: 20px; bottom: 1px; background: #4cc2ff; }
.badge { position: absolute; left: 20px; top: 9px; width: 35px; height: 20px; border-radius: 10px; background: #4cc2ff; color: #111; font: 14px/20px "Open Sans", sans-serif; text-align: center; }
.tray { margin-left: auto; padding-right: 24px; display: flex; align-items: center; line-height: 20px; font-size: 14.7px; }
.lang { text-align: center; margin: 0 22px 3px 25px; width: 30px; letter-spacing: -.3px; }
.time { text-align: right; margin: 0 0 3px 15px; width: 80px; white-space: nowrap; letter-spacing: -.03px; }
```
FILE: script.js
```js
const NS = "http://www.w3.org/2000/svg";

// Ground grid: one unit is one minor cell, every fifth line is a major one.
const at = (u, v) => `${(985 + 30.12 * u - 3.88 * v).toFixed(1)} ${(522.9 + 2.406 * u + 18.68 * v).toFixed(1)}`;
function gridPath(test) {
  let d = "";
  for (let u = -29; u <= 30; u++) if (test(u)) d += `M${at(u, -32)}L${at(u, 34)}`;
  for (let v = -32; v <= 34; v++) if (test(v)) d += `M${at(-29, v)}L${at(30, v)}`;
  return d;
}
function addPath(parent, d, color, width) {
  const p = document.createElementNS(NS, "path");
  p.setAttribute("d", d);
  p.setAttribute("stroke", color);
  p.setAttribute("stroke-width", width);
  p.setAttribute("fill", "none");
  parent.appendChild(p);
}
const minor = gridPath(n => n % 5 !== 0);
const major = gridPath(n => n % 5 === 0);
const grid = document.getElementById("grid");
addPath(grid, minor, "#e5e5e5", 1);
addPath(grid, major, "#c2c2c2", 1.1);
addPath(grid, `M${at(-29, -32)}L${at(-29, 34)}M${at(30, -32)}L${at(30, 34)}`, "#666", 1.3);
const hull = document.getElementById("hullLines");
addPath(hull, minor, "#847b55", 0.6);
addPath(hull, major, "#6f6747", 1);

// Browser tree: label, level, cell width, visibility icon, type icon, twisty.
const rows = [
  ["Named Views", 0, 137, "", "folder", "closed"],
  ["Selection Sets", 0, 142, "", "folder", "closed"],
  ["Origin", 0, 123, "eyeoff", "folder", "closed"],
  ["Bodies", 0, 128, "eye", "folder", "open"],
  ["Body3 (2)", 1, 144, "eye", "surf"],
  ["Body4 (2)", 1, 144, "eye", "surf"],
  ["Body5 (1)", 1, 144, "eye", "surf"],
  ["Body17 (2)", 1, 154, "eye", "surf"],
  ["Body21", 1, 129, "eye", "solid"],
  ["Body6 (1)", 1, 144, "eye", "surf"],
  ["Body9 (1)", 1, 144, "eye", "surf"],
  ["Body22", 1, 134, "eye", "solid"],
  ["Sketches", 0, 143, "eyeoff", "folder", "open"],
  ["Sketch1", 1, 134, "eyeoff", "sketch"],
  ["Sketch6", 1, 134, "eyeoff", "sketch"],
  ["Sketch7", 1, 139, "eyeoff", "sketchlock"],
  ["Sketch9", 1, 139, "eyeoff", "sketch"],
  ["Sketch10", 1, 144, "eyeoff", "sketch"],
  ["Sketch12", 1, 144, "eyeoff", "sketch"],
  ["Sketch13", 1, 144, "eyeoff", "sketch"],
  ["Sketch14", 1, 144, "eyeoff", "sketch"],
  ["Sketch15", 1, 144, "eyeoff", "sketch"],
  ["Sketch16", 1, 144, "eyeoff", "sketch"]
];
const icon = (id, w, h) => id ? `<svg width="${w}" height="${h}"><use href="#${id}"/></svg>` : "";
const twisty = {
  closed: '<svg width="8" height="13" viewBox="0 0 8 13"><path d="M.7 1v11L7 6.500z" fill="#fff" stroke="#333"/></svg>',
  open: '<svg width="9" height="9" viewBox="0 0 9 9"><path d="M8.500.500v8H.5z" fill="#555" stroke="#111"/></svg>'
};
document.getElementById("tree").innerHTML = rows.map(([text, level, width, vis, type, tw]) =>
  `<div class="row${level ? " child" : ""}"><div class="tw">${twisty[tw] || ""}</div>` +
  `<div class="cell" style="width:${width}px">${icon(vis, 20, 14)}${icon(type, 20, type === "folder" ? 16 : 20)}<span>${text}</span></div></div>`
).join("");

// Timeline: s sketch, p plane, f patch, e extend, m mirror, a angle, b split, l loft; "!" warning, "x" error.
const kinds = { s: "sketch", p: "plane", f: "patch", e: "extend", m: "mirror", a: "angle", b: "split", l: "loft" };
const steps = "s p p p p p p p p p p s s! p s s! s s s s s! s s s s s! s s s f! f! e e f! s a b s s l m! mx s! f m m e e".split(" ");
document.getElementById("steps").innerHTML = steps.map(s =>
  `<div class="step${s[1] === "!" ? " warn" : s[1] === "x" ? " err" : ""}"><div>${icon(kinds[s[0]], 20, 20)}</div></div>`
).join("");
```
